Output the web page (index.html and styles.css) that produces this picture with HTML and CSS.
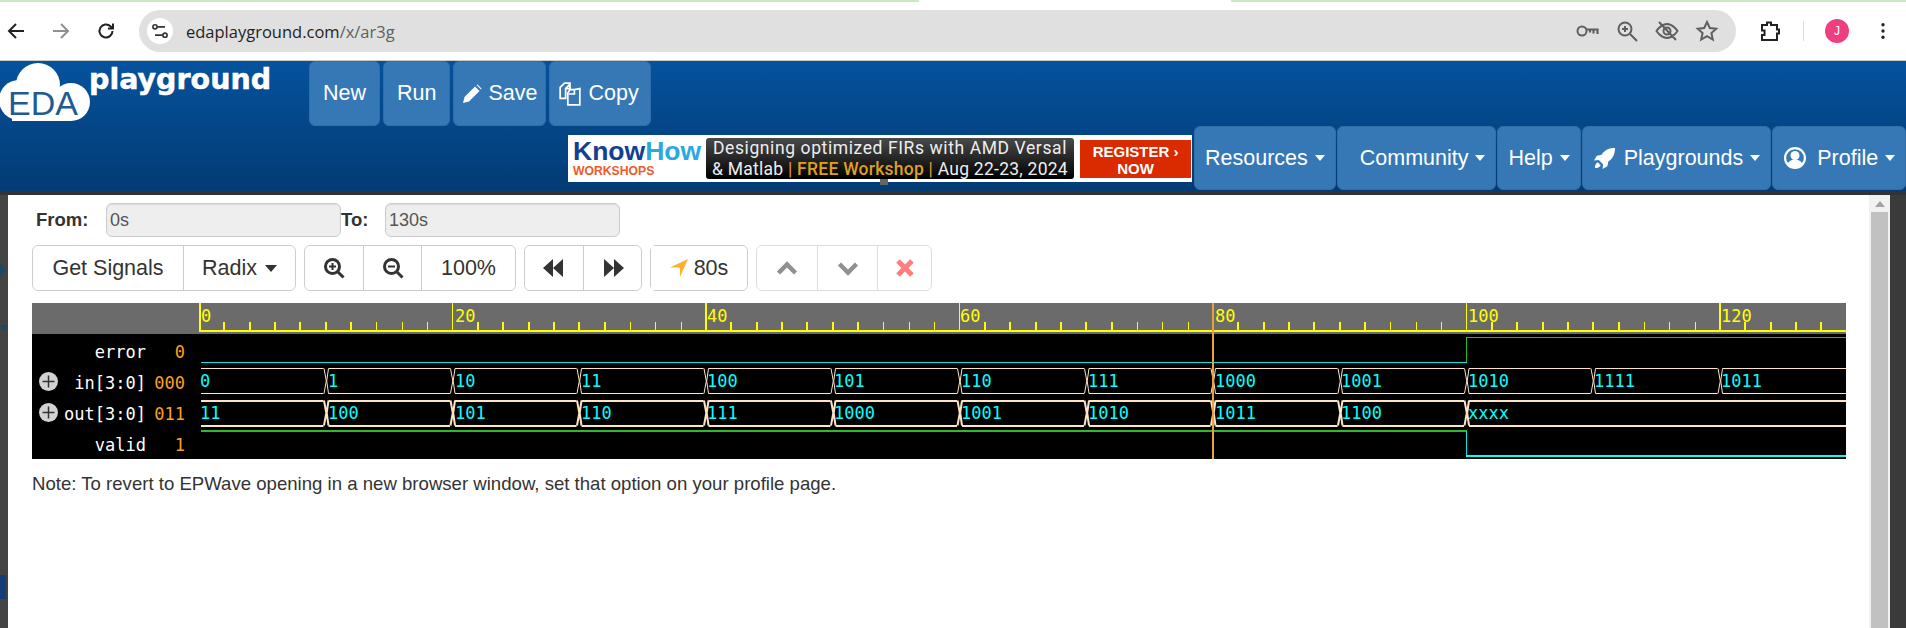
FILE: index.html
```html
<!DOCTYPE html>
<html lang="en">
<head>
    <meta charset="UTF-8">
    <title>EDA Playground</title>
    <link rel="stylesheet" href="styles.css">
</head>
<body>
    <div class="tabstrip"><span class="tab-green tab-left"></span><span class="tab-gap"></span><span class="tab-green tab-right"></span></div>

    <div class="chrome">
        <svg class="ic" viewBox="0 0 24 24"><path class="ic-dark" d="M20 12H6M12 5l-7 7 7 7"/></svg>
        <svg class="ic" viewBox="0 0 24 24"><path class="ic-off" d="M4 12h14M12 5l7 7-7 7"/></svg>
        <svg class="ic" viewBox="0 0 24 24"><path class="ic-dark" d="M18.5 12a6.500 6.500 0 1 1-2-4.700L19 9.500M19 4.500v5h-5"/></svg>
        <div class="omnibox">
            <span class="site-chip">
                <svg viewBox="0 0 24 24" width="20" height="20"><path class="ic-thin" d="M9 7h9M6 17h9"/><circle class="ic-thin" cx="6" cy="7" r="2.500"/><circle class="ic-thin" cx="18" cy="17" r="2.500"/></svg>
            </span>
            <span class="url">edaplayground.com<span class="url-path">/x/ar3g</span></span>
            <span class="omni-icons">
                <svg class="ic" viewBox="0 0 24 24"><circle class="ic-grey" cx="7" cy="12" r="4.500"/><path class="ic-grey ic-key" d="M11.500 10.500H22.500V15M18.500 10.500v4M15 10.500v3"/></svg>
                <svg class="ic" viewBox="0 0 24 24"><circle class="ic-grey" cx="10" cy="10" r="6.500"/><path class="ic-grey" d="M15 15l7 7M10 7v6M7 10h6"/></svg>
                <svg class="ic" viewBox="0 0 24 24"><path class="ic-grey" d="M1.500 12S6 5 12 5s10.500 7 10.500 7-4.500 7-10.500 7S1.500 12 1.500 12zM4 3l17 18"/><circle class="ic-grey" cx="12" cy="12" r="3.500"/></svg>
                <svg class="ic" viewBox="0 0 24 24"><path class="ic-grey" d="M12 3l2.800 6 6.400.700-4.800 4.300 1.400 6.500L12 17.200 6.200 20.500 7.600 14 2.800 9.700 9.200 9z"/></svg>
            </span>
        </div>
        <svg class="ic ext" viewBox="0 0 24 24"><path class="ic-dark" d="M4 6h5V3.500h4V6h6v4.500h2v4h-2V21H4v-5h2.500v-4.500H4z"/></svg>
        <span class="chrome-divider"></span>
        <span class="avatar">J</span>
        <svg class="dots" viewBox="0 0 6 24"><circle cx="3" cy="4.500" r="2"/><circle cx="3" cy="12" r="2"/><circle cx="3" cy="19.500" r="2"/></svg>
    </div>

    <div class="navbar">
        <div class="nav-row">
            <svg class="logo" viewBox="0 0 290 64">
                <g class="cloud">
                    <circle cx="38" cy="24" r="22"/>
                    <circle cx="19" cy="39" r="20"/>
                    <circle cx="71" cy="41" r="19"/>
                    <rect x="12" y="36" width="60" height="24"/>
                </g>
                <text class="logo-eda" x="8" y="54">EDA</text>
                <text class="logo-play" x="89" y="28">playground</text>
            </svg>
            <a class="nav-btn">New</a>
            <a class="nav-btn">Run</a>
            <a class="nav-btn nav-tight">
                <svg class="nav-ic" viewBox="0 0 20 20"><path d="M1 19l1.500-6L13 2.500l4.500 4.500L7 17.500zM14.500 1l1-.500 4 4-.500 1z"/></svg>
                Save
            </a>
            <a class="nav-btn nav-tight nav-copy">
                <svg class="nav-ic copy-ic" viewBox="0 0 22 22"><path class="nav-ic-line" d="M2 15V5l4-4h5v5H7v9zM7 6l4-4M11 7h4l5-1v15H9V10zM15 7v4h-5"/></svg>
                Copy
            </a>
        </div>
        <div class="nav-row nav-row2">
            <div class="banner">
                <div class="knowhow">
                    <div class="kh-name">Know<span class="kh-how">How</span></div>
                    <div class="kh-sub">WORKSHOPS</div>
                </div>
                <div class="ad-box">
                    <div class="ad-line1">Designing optimized FIRs with AMD Versal</div>
                    <div class="ad-line2">&amp; Matlab <span class="ad-bar">|</span> <span class="ad-free">FREE Workshop</span> <span class="ad-bar">|</span> Aug 22-23, 2024</div>
                </div>
                <div class="ad-register">REGISTER ›<br>NOW</div>
                <span class="ad-handle"></span>
            </div>
            <a class="nav-btn menu">Resources <i class="caret"></i></a>
            <a class="nav-btn menu community">Community <i class="caret"></i></a>
            <a class="nav-btn menu">Help <i class="caret"></i></a>
            <a class="nav-btn menu">
                <svg class="nav-ic rocket" viewBox="0 0 24 24"><path d="M23 1c-6 0-11 2-14 7l-5 1-3 5 5-.500 4.500 4.500L10 23l5-3 1-5c5-3 7-8 7-14zM5 16c-2 1-3 3-3 6 3 0 5-1 6-3z"/></svg>
                Playgrounds <i class="caret"></i>
            </a>
            <a class="nav-btn menu">
                <svg class="nav-ic profile" viewBox="0 0 24 24"><circle cx="12" cy="12" r="11" fill="#fff"/><circle cx="12" cy="12" r="8.800" fill="#337ab7"/><circle cx="12" cy="9.500" r="4.500" fill="#fff"/><path d="M4.500 18c1-3 4-4.500 7.500-4.500s6.500 1.500 7.500 4.500c-2 2.500-4.500 3.500-7.500 3.500S6.500 20.500 4.500 18z" fill="#fff"/></svg>
                Profile <i class="caret"></i>
            </a>
        </div>
    </div>

    <div class="page-edge"></div>

    <div class="page">
        <div class="backdrop">
            <span class="mark mark-a"></span>
            <span class="mark mark-b"></span>
            <span class="mark mark-c"></span>
        </div>

        <div class="panel">
            <div class="range">
                <label class="range-from">From:</label>
                <input class="range-input" value="0s" disabled>
                <label class="range-to">To:</label>
                <input class="range-input" value="130s" disabled>
            </div>

            <div class="toolbar">
                <div class="group">
                    <button class="tb-btn tb-get">Get Signals</button>
                    <button class="tb-btn tb-radix">Radix <i class="caret caret-dark"></i></button>
                </div>
                <div class="group">
                    <button class="tb-btn tb-icon">
                        <svg viewBox="0 0 22 22"><circle class="tb-line" cx="9.500" cy="9.500" r="7"/><path class="tb-line" d="M15 15l5.500 5.500"/><path class="tb-thin" d="M9.500 6v7M6 9.500h7"/></svg>
                    </button>
                    <button class="tb-btn tb-icon">
                        <svg viewBox="0 0 22 22"><circle class="tb-line" cx="9.500" cy="9.500" r="7"/><path class="tb-line" d="M15 15l5.500 5.500"/><path class="tb-thin" d="M6 9.500h7"/></svg>
                    </button>
                    <button class="tb-btn tb-pct">100%</button>
                </div>
                <div class="group">
                    <button class="tb-btn tb-icon">
                        <svg viewBox="0 0 22 22"><path class="tb-fill" d="M0 11l10-9v18zM10 11l10-9v18z"/></svg>
                    </button>
                    <button class="tb-btn tb-icon">
                        <svg viewBox="0 0 22 22"><path class="tb-fill" d="M2 2l10 9-10 9zM12 2l10 9-10 9z"/></svg>
                    </button>
                </div>
                <div class="group">
                    <button class="tb-btn tb-cursor">
                        <svg viewBox="0 0 18 18"><path class="tb-orange" d="M0 8.500L18 0 10 18V8.500z"/></svg>
                        80s
                    </button>
                </div>
                <div class="group group-off">
                    <button class="tb-btn tb-icon">
                        <svg viewBox="0 0 22 22"><path class="tb-chev" d="M2.500 16L11 7.500l8.500 8.500"/></svg>
                    </button>
                    <button class="tb-btn tb-icon">
                        <svg viewBox="0 0 22 22"><path class="tb-chev" d="M2.500 7l8.500 8.500L19.500 7"/></svg>
                    </button>
                    <button class="tb-btn tb-icon tb-x">
                        <svg viewBox="0 0 22 22"><path class="tb-red" d="M4 4l14 14M18 4L4 18"/></svg>
                    </button>
                </div>
            </div>

            <svg class="wave" viewBox="32 303 1814 156" width="1814" height="156" shape-rendering="crispEdges">
                <defs>
                    <g id="bus-edge" shape-rendering="auto">
                        <rect x="-2.500" y="-2" width="5" height="29" fill="#000"/>
                        <path class="edge-line" d="M-2 0L.3 12.500L-2 25M2.500 0L.7 12.500L2.500 25"/>
                    </g>
                </defs>

                <rect x="32" y="303" width="1814" height="31" fill="#6b6b6b"/>
                <rect x="199" y="330" width="1647" height="2" fill="#ff0"/>
                <path class="tick" d="M199.500 303V330M200.500 303V330M452.500 303V330M706 303V330M959.500 303V330M1466.500 303V330M1720 303V330"/>
                <path class="tick" d="M224 322V330M250 322V330M275 322V330M300 322V330M326 322V330M351 322V330M478 322V330M503 322V330M529 322V330M554 322V330M579 322V330M605 322V330M731 322V330M757 322V330M782 322V330M807 322V330M833 322V330M858 322V330M985 322V330M1010 322V330M1036 322V330M1061 322V330M1086 322V330M1112 322V330M1238 322V330M1264 322V330M1289 322V330M1314 322V330M1340 322V330M1365 322V330M1492 322V330M1517 322V330M1543 322V330M1568 322V330M1593 322V330M1619 322V330M1745 322V330M1771 322V330M1796 322V330M1821 322V330"/>
                <path class="tick tick-thin" d="M376 322V330M402 322V330M427 322V330M630 322V330M655 322V330M681 322V330M883 322V330M909 322V330M934 322V330M1137 322V330M1162 322V330M1188 322V330M1390 322V330M1416 322V330M1441 322V330M1644 322V330M1669 322V330M1695 322V330"/>
                <text class="ruler-num" x="201" y="322">0</text>
                <text class="ruler-num" x="455" y="322">20</text>
                <text class="ruler-num" x="707" y="322">40</text>
                <text class="ruler-num" x="960" y="322">60</text>
                <text class="ruler-num" x="1215" y="322">80</text>
                <text class="ruler-num" x="1468" y="322">100</text>
                <text class="ruler-num" x="1721" y="322">120</text>

                <rect x="32" y="334" width="1814" height="125" fill="#000"/>

                <text class="sig-name" x="146" y="358">error</text>
                <text class="sig-name" x="146" y="389">in[3:0]</text>
                <text class="sig-name" x="146" y="420">out[3:0]</text>
                <text class="sig-name" x="146" y="451">valid</text>
                <text class="sig-val" x="185" y="358">0</text>
                <text class="sig-val" x="185" y="389">000</text>
                <text class="sig-val" x="185" y="420">011</text>
                <text class="sig-val" x="185" y="451">1</text>

                <g class="expand" shape-rendering="auto">
                    <circle cx="48.500" cy="381.500" r="9.500"/>
                    <path d="M42.500 381.500h12M48.500 375.500v12"/>
                    <circle cx="48.500" cy="412.500" r="9.500"/>
                    <path d="M42.500 412.500h12M48.500 406.500v12"/>
                </g>

                <!-- error -->
                <path class="low" d="M201 362.500H1466.500"/>
                <path class="high" d="M1466.500 362V337.500H1846"/>

                <!-- in[3:0] -->
                <g class="bus">
                    <path d="M201 368.500H1846M201 393.500H1846"/>
                    <use href="#bus-edge" x="326" y="368.500"/>
                    <use href="#bus-edge" x="452.500" y="368.500"/>
                    <use href="#bus-edge" x="579" y="368.500"/>
                    <use href="#bus-edge" x="706" y="368.500"/>
                    <use href="#bus-edge" x="833" y="368.500"/>
                    <use href="#bus-edge" x="959.500" y="368.500"/>
                    <use href="#bus-edge" x="1086.500" y="368.500"/>
                    <use href="#bus-edge" x="1213" y="368.500"/>
                    <use href="#bus-edge" x="1340" y="368.500"/>
                    <use href="#bus-edge" x="1466.500" y="368.500"/>
                    <use href="#bus-edge" x="1593" y="368.500"/>
                    <use href="#bus-edge" x="1720" y="368.500"/>
                </g>
                <text class="bus-val" x="200" y="387">0</text>
                <text class="bus-val" x="328" y="387">1</text>
                <text class="bus-val" x="455" y="387">10</text>
                <text class="bus-val" x="581" y="387">11</text>
                <text class="bus-val" x="707" y="387">100</text>
                <text class="bus-val" x="834" y="387">101</text>
                <text class="bus-val" x="961" y="387">110</text>
                <text class="bus-val" x="1088" y="387">111</text>
                <text class="bus-val" x="1215" y="387">1000</text>
                <text class="bus-val" x="1341" y="387">1001</text>
                <text class="bus-val" x="1468" y="387">1010</text>
                <text class="bus-val" x="1594" y="387">1111</text>
                <text class="bus-val" x="1721" y="387">1011</text>

                <!-- out[3:0] -->
                <g class="bus bus-thick">
                    <path d="M201 400.500H1846M201 425.500H1846"/>
                    <use href="#bus-edge" x="326" y="400.500"/>
                    <use href="#bus-edge" x="452.500" y="400.500"/>
                    <use href="#bus-edge" x="579" y="400.500"/>
                    <use href="#bus-edge" x="706" y="400.500"/>
                    <use href="#bus-edge" x="833" y="400.500"/>
                    <use href="#bus-edge" x="959.500" y="400.500"/>
                    <use href="#bus-edge" x="1086.500" y="400.500"/>
                    <use href="#bus-edge" x="1213" y="400.500"/>
                    <use href="#bus-edge" x="1340" y="400.500"/>
                    <use href="#bus-edge" x="1466.500" y="400.500"/>
                </g>
                <text class="bus-val" x="200" y="419">11</text>
                <text class="bus-val" x="328" y="419">100</text>
                <text class="bus-val" x="455" y="419">101</text>
                <text class="bus-val" x="581" y="419">110</text>
                <text class="bus-val" x="707" y="419">111</text>
                <text class="bus-val" x="834" y="419">1000</text>
                <text class="bus-val" x="961" y="419">1001</text>
                <text class="bus-val" x="1088" y="419">1010</text>
                <text class="bus-val" x="1215" y="419">1011</text>
                <text class="bus-val" x="1341" y="419">1100</text>
                <text class="bus-val" x="1468" y="419">xxxx</text>

                <!-- valid -->
                <path class="high high-thick" d="M201 431H1467"/>
                <path class="low" d="M1466.500 431V456"/>
                <path class="low low-thick" d="M1466 456H1846"/>

                <path class="cursor" d="M1213 303V459"/>
            </svg>

            <p class="note">Note: To revert to EPWave opening in a new browser window, set that option on your profile page.</p>
        </div>

        <div class="scrollbar">
            <span class="scroll-up"></span>
            <span class="scroll-thumb"></span>
        </div>
        <div class="backdrop backdrop-right"></div>
    </div>
</body>
</html>
```

FILE: styles.css
```css
html, body {
    margin: 0;
    height: 628px;
    overflow: hidden;
    background: #fff;
    font-family: "Liberation Sans", Arial, sans-serif;
}

/* browser top */
.tabstrip {
    display: flex;
    height: 2px;
}

.tab-green {
    background: #cfe8c4;
}

.tab-left {
    width: 919px;
}

.tab-gap {
    width: 312px;
}

.tab-right {
    flex: 1;
}

.chrome {
    display: flex;
    align-items: center;
    height: 58px;
    padding: 0 0 0 4px;
    border-bottom: 1px solid #c8c8c8;
    box-sizing: content-box;
}

.ic {
    width: 24px;
    height: 24px;
    margin-right: 21px;
    flex: none;
    fill: none;
}

.ic-dark {
    fill: none;
    stroke: #222;
    stroke-width: 2;
}

.ic-off {
    fill: none;
    stroke: #8f8f8f;
    stroke-width: 2;
}

.ic-thin {
    fill: none;
    stroke: #333;
    stroke-width: 2;
}

.ic-grey {
    fill: none;
    stroke: #5f5f5f;
    stroke-width: 2;
}

.ic-key {
    stroke-width: 2.200;
}

.omnibox {
    display: flex;
    align-items: center;
    width: 1597px;
    height: 42px;
    flex: none;
    border-radius: 21px;
    background: #e0e0e0;
}

.site-chip {
    display: flex;
    align-items: center;
    justify-content: center;
    width: 26px;
    height: 26px;
    margin-left: 8px;
    border-radius: 50%;
    background: #fff;
}

.url {
    margin-left: 13px;
    font-family: "Open Sans", sans-serif;
    font-size: 16.500px;
    color: #1f1f1f;
}

.url-path {
    color: #5f5f5f;
}

.omni-icons {
    display: flex;
    margin-left: auto;
    padding-right: 17px;
    gap: 16px;
}

.omni-icons .ic {
    margin: 0;
}

.chrome .ext {
    margin: 0 0 0 22px;
}

.chrome-divider {
    width: 1px;
    height: 20px;
    margin-left: 21px;
    background: #cfe8c4;
}

.avatar {
    width: 24px;
    height: 24px;
    margin-left: 21px;
    border-radius: 50%;
    background: #ee3f7e;
    color: #fff;
    font-size: 12px;
    line-height: 24px;
    text-align: center;
}

.dots {
    width: 6px;
    height: 20px;
    margin-left: 31px;
    fill: #222;
}

/* navbar */
.navbar {
    height: 130px;
    background: linear-gradient(#05529d, #033b74);
    overflow: hidden;
}

.nav-row {
    display: flex;
    height: 65px;
    gap: 3px;
    width: 2000px;
}

.nav-row2 {
    gap: 1px;
}

.logo {
    width: 290px;
    height: 64px;
    margin-right: 16px;
    flex: none;
}

.cloud {
    fill: #fff;
}

.logo-eda {
    fill: #245a94;
    font-size: 34px;
}

.logo-play {
    fill: #fff;
    stroke: #fff;
    stroke-width: .5;
    font-family: "DejaVu Sans", sans-serif;
    font-weight: bold;
    font-size: 28.500px;
}

.nav-btn {
    display: flex;
    align-items: center;
    gap: 6px;
    flex: none;
    box-sizing: border-box;
    height: 65px;
    padding: 0 13px;
    background: #3678b6;
    border: 1px solid #2f6ea8;
    border-radius: 6px;
    color: #fff;
    font-size: 21.500px;
}

.nav-tight {
    padding: 0 8px;
}

.nav-copy {
    padding-right: 11px;
}

.menu {
    height: 64px;
    padding: 0 10px;
    gap: 7px;
}

.community {
    padding-left: 22px;
}

.nav-ic {
    width: 20px;
    height: 20px;
    fill: #fff;
}

.copy-ic {
    width: 24px;
    height: 24px;
}

.nav-ic-line {
    fill: none;
    stroke: #fff;
    stroke-width: 1.600;
}

.rocket {
    width: 23px;
    height: 25px;
    margin-right: 1px;
}

.profile {
    width: 24px;
    height: 26px;
    margin-right: 3px;
}

.caret {
    width: 0;
    height: 0;
    border-top: 6px solid #fff;
    border-left: 5.500px solid transparent;
    border-right: 5.500px solid transparent;
}

.caret-dark {
    display: inline-block;
    vertical-align: 3px;
    margin-left: 2px;
    border-top: 7px solid #333;
    border-left-width: 6.500px;
    border-right-width: 6.500px;
}

/* ad banner */
.banner {
    position: relative;
    display: flex;
    box-sizing: border-box;
    width: 624px;
    height: 47px;
    margin: 9px 1px 0 568px;
    padding: 3px 1px 3px 0;
    background: #fff;
    flex: none;
}

.knowhow {
    width: 138px;
    padding-left: 5px;
    box-sizing: border-box;
}

.kh-name {
    font-weight: bold;
    font-size: 26.500px;
    line-height: 26px;
    color: #13408f;
}

.kh-how {
    color: #29a9e0;
}

.kh-sub {
    margin-top: 1px;
    font-weight: bold;
    font-size: 12.200px;
    line-height: 12px;
    color: #ef5a2a;
}

.ad-box {
    width: 369px;
    height: 41px;
    border-radius: 3px;
    background: linear-gradient(#4a4a4a, #000);
    color: #eee;
    font-family: Roboto, sans-serif;
    font-size: 17.500px;
    line-height: 20.500px;
    text-align: center;
    white-space: nowrap;
}

.ad-line1 {
    letter-spacing: .6px;
}

.ad-line2 {
    letter-spacing: .25px;
}

.ad-bar {
    color: #e09a3a;
}

.ad-free {
    color: #dfa020;
    font-weight: 500;
}

.ad-register {
    width: 111px;
    height: 38px;
    margin: 2px 0 0 6px;
    background: #d92a00;
    color: #fff;
    font-weight: bold;
    font-size: 15px;
    line-height: 17px;
    text-align: center;
    padding-top: 3px;
    box-sizing: border-box;
}

.ad-handle {
    position: absolute;
    left: 312px;
    top: 44px;
    width: 8px;
    height: 6px;
    background: #666;
}

/* page */
.page-edge {
    height: 4px;
    background: #333;
}

.page {
    display: flex;
    height: 433px;
}

.backdrop {
    width: 8px;
    flex: none;
    background: #444;
}

.backdrop-right {
    width: 16px;
    background: #3a3a3a;
}

.mark {
    display: block;
    background: #1c4a66;
}

.mark-a {
    width: 6px;
    height: 14px;
    margin-top: 68px;
    clip-path: polygon(0 0, 100% 50%, 0 100%);
}

.mark-b {
    width: 8px;
    height: 7px;
    margin-top: 48px;
    clip-path: polygon(0 0, 100% 0, 50% 100%);
}

.mark-c {
    width: 6px;
    height: 24px;
    margin-top: 243px;
    background: #133f78;
}

.panel {
    flex: 1;
    min-width: 0;
    padding: 8px 0 0 24px;
    background: #fff;
}

.scrollbar {
    display: flex;
    flex-direction: column;
    align-items: center;
    width: 21px;
    flex: none;
    background: #f1f1f1;
}

.scroll-up {
    width: 0;
    height: 0;
    margin: 6px 0 5px;
    border-bottom: 6px solid #a3a3a3;
    border-left: 5px solid transparent;
    border-right: 5px solid transparent;
}

.scroll-thumb {
    width: 17px;
    flex: 1;
    background: #c1c1c1;
}

.range {
    display: flex;
    align-items: center;
    height: 34px;
    color: #333;
    font-size: 18.500px;
    font-weight: bold;
}

.range-from {
    width: 74px;
    padding-left: 4px;
    box-sizing: border-box;
}

.range-to {
    width: 44px;
}

.range-input {
    box-sizing: border-box;
    width: 235px;
    height: 34px;
    padding: 0 3px;
    background: #eee;
    border: 1px solid #ccc;
    border-radius: 6px;
    box-shadow: inset 0 1px 1px rgba(0, 0, 0, .08);
    color: #555;
    font-family: inherit;
    font-size: 18px;
}

.toolbar {
    display: flex;
    gap: 8px;
    margin-top: 8px;
}

.group {
    display: flex;
    height: 46px;
    box-sizing: border-box;
    border: 1px solid #ccc;
    border-radius: 6px;
}

.group-off {
    opacity: .65;
}

.tb-btn {
    display: flex;
    align-items: center;
    justify-content: center;
    gap: 6px;
    padding: 0;
    background: #fff;
    border: 0;
    border-left: 1px solid #ccc;
    border-radius: 0;
    color: #333;
    font-family: inherit;
    font-size: 21.500px;
    white-space: nowrap;
}

.tb-btn:first-child {
    border-left: 0;
    border-radius: 6px 0 0 6px;
}

.tb-btn:last-child {
    border-radius: 0 6px 6px 0;
}

.tb-get {
    width: 150px;
}

.tb-radix {
    width: 112px;
}

.tb-icon {
    width: 58px;
}

.tb-pct {
    width: 94px;
}

.group-off .tb-icon {
    width: 60px;
}

.group-off .tb-x {
    width: 54px;
}

.tb-icon svg {
    width: 22px;
    height: 22px;
}

.tb-cursor {
    width: 96px;
    border-radius: 6px;
}

.tb-cursor svg {
    width: 18px;
    height: 18px;
}

.tb-line {
    fill: none;
    stroke: #333;
    stroke-width: 3;
}

.tb-thin {
    fill: none;
    stroke: #333;
    stroke-width: 2;
}

.tb-fill {
    fill: #333;
}

.tb-orange {
    fill: #ffb02e;
}

.tb-chev {
    fill: none;
    stroke: #555;
    stroke-width: 4.500;
}

.tb-red {
    fill: none;
    stroke: #ff3b3b;
    stroke-width: 5;
}

/* waveform */
.wave {
    display: block;
    margin-top: 12px;
    font-family: "DejaVu Sans Mono", monospace;
    font-size: 17px;
}

.tick {
    fill: none;
    stroke: #ff0;
    stroke-width: 1.500;
}

.tick-thin {
    stroke-width: 1;
}

.ruler-num {
    fill: #ff0;
}

.sig-name {
    fill: #fff;
    text-anchor: end;
}

.sig-val {
    fill: #ff9f1c;
    text-anchor: end;
}

.expand circle {
    fill: #d2d2d2;
}

.expand path {
    fill: none;
    stroke: #333;
    stroke-width: 1.500;
}

.low {
    fill: none;
    stroke: #00e5e5;
    stroke-width: 1;
}

.low-thick {
    stroke: #0ff;
    stroke-width: 2;
}

.high {
    fill: none;
    stroke: #22bb22;
    stroke-width: 1;
}

.high-thick {
    stroke: #2db82d;
    stroke-width: 2;
}

.bus {
    fill: none;
    stroke: #ffe4c4;
    stroke-width: 1;
}

.bus-thick {
    stroke-width: 2;
}

.edge-line {
    fill: none;
}

#bus-edge rect {
    stroke: none;
}

.bus-val {
    fill: #0ff;
}

.cursor {
    fill: none;
    stroke: #e8a33d;
    stroke-width: 1.500;
}

.note {
    margin: 14px 0 0 0;
    color: #333;
    font-size: 18.600px;
}
```
